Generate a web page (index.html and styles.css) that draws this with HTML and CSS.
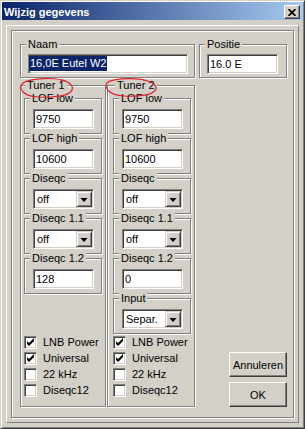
FILE: index.html
```html
<!DOCTYPE html>
<html lang="nl">
<head>
    <meta charset="UTF-8">
    <meta name="viewport" content="width=device-width, initial-scale=1.0">
    <title>Wijzig gegevens</title>
    <link rel="stylesheet" href="styles.css">
</head>
<body>
    <div class="window">
        <div class="titlebar">
            <span class="title">Wijzig gegevens</span>
            <span class="close-btn">
                <svg width="8" height="7" viewBox="0 0 8 7"><path d="M0.5 0 L7.5 7 M7.5 0 L0.5 7" stroke="#000" stroke-width="1.7" fill="none"/></svg>
            </span>
        </div>

        <div class="panel">
            <div class="frame">
                <div class="left-col">
                    <div class="group naam">
                        <span class="group-label">Naam</span>
                        <div class="edit"><span class="selected">16,0E Eutel W2</span></div>
                    </div>

                    <div class="tuners">
                        <!-- red hand drawn marks round the tuner labels -->
                        <svg class="marks" width="175" height="30" viewBox="0 0 175 30">
                            <path d="M46 5 C36 1, 10 2, 3 7 C-2 12, 2 20, 18 21 C32 22, 50 20, 52 14 C54 9, 48 5, 40 4" fill="none" stroke="#e0242c" stroke-width="1.2"/>
                            <path d="M130 6 C120 1, 95 2, 88 6 C83 11, 88 19, 104 20 C118 21, 134 19, 136 13 C137 8, 130 5, 123 4" fill="none" stroke="#e0242c" stroke-width="1.2"/>
                        </svg>

                        <div class="group tuner">
                            <span class="group-label">Tuner 1</span>
                            <div class="group field">
                                <span class="group-label">LOF low</span>
                                <div class="edit">9750</div>
                            </div>
                            <div class="group field">
                                <span class="group-label">LOF high</span>
                                <div class="edit">10600</div>
                            </div>
                            <div class="group field">
                                <span class="group-label">Diseqc</span>
                                <div class="edit combo"><span class="combo-text">off</span><span class="drop-btn"></span></div>
                            </div>
                            <div class="group field">
                                <span class="group-label">Diseqc 1.1</span>
                                <div class="edit combo"><span class="combo-text">off</span><span class="drop-btn"></span></div>
                            </div>
                            <div class="group field">
                                <span class="group-label">Diseqc 1.2</span>
                                <div class="edit">128</div>
                            </div>
                            <div class="checks">
                                <div class="check-row"><span class="checkbox checked"></span>LNB Power</div>
                                <div class="check-row"><span class="checkbox checked"></span>Universal</div>
                                <div class="check-row"><span class="checkbox"></span>22 kHz</div>
                                <div class="check-row"><span class="checkbox"></span>Diseqc12</div>
                            </div>
                        </div>

                        <div class="group tuner tuner-2">
                            <span class="group-label">Tuner 2</span>
                            <div class="group field">
                                <span class="group-label">LOF low</span>
                                <div class="edit">9750</div>
                            </div>
                            <div class="group field">
                                <span class="group-label">LOF high</span>
                                <div class="edit">10600</div>
                            </div>
                            <div class="group field">
                                <span class="group-label">Diseqc</span>
                                <div class="edit combo"><span class="combo-text">off</span><span class="drop-btn"></span></div>
                            </div>
                            <div class="group field">
                                <span class="group-label">Diseqc 1.1</span>
                                <div class="edit combo"><span class="combo-text">off</span><span class="drop-btn"></span></div>
                            </div>
                            <div class="group field">
                                <span class="group-label">Diseqc 1.2</span>
                                <div class="edit">0</div>
                            </div>
                            <div class="group field">
                                <span class="group-label">Input</span>
                                <div class="edit combo"><span class="combo-text">Separ.</span><span class="drop-btn"></span></div>
                            </div>
                            <div class="checks">
                                <div class="check-row"><span class="checkbox checked"></span>LNB Power</div>
                                <div class="check-row"><span class="checkbox checked"></span>Universal</div>
                                <div class="check-row"><span class="checkbox"></span>22 kHz</div>
                                <div class="check-row"><span class="checkbox"></span>Diseqc12</div>
                            </div>
                        </div>
                    </div>
                </div>

                <div class="right-col">
                    <div class="group positie">
                        <span class="group-label">Positie</span>
                        <div class="edit">16.0 E</div>
                    </div>
                    <button type="button" class="btn btn-cancel">Annuleren</button>
                    <button type="button" class="btn">OK</button>
                </div>
            </div>
        </div>
    </div>
</body>
</html>
```

FILE: styles.css
```css
body {
    margin: 0;
    padding: 0;
    font-family: "Liberation Sans", Arial, sans-serif;
    font-size: 11px;
    color: #000;
    background-color: #d4d0c8;
}

/* Window frame */
.window {
    width: 305px;
    height: 429px;
    box-sizing: border-box;
    padding: 1px;
    border: 1px solid;
    border-color: #d4d0c8 #404040 #404040 #d4d0c8;
    box-shadow: inset 1px 1px #fff, inset -1px -1px #808080;
    background-color: #d4d0c8;
    display: flex;
    flex-direction: column;
}

.titlebar {
    height: 18px;
    display: flex;
    align-items: flex-start;
    background: linear-gradient(to right, #0a246a, #a6caf0);
}

.title {
    flex: 1;
    padding: 2px 0 0 2px;
    line-height: 16px;
    font-weight: bold;
    color: #fff;
}

.close-btn {
    width: 16px;
    height: 14px;
    box-sizing: border-box;
    margin: 3px 3px 0 0;
    border: 1px solid;
    border-color: #fff #404040 #404040 #fff;
    box-shadow: inset -1px -1px #808080;
    background-color: #d4d0c8;
    display: flex;
    align-items: center;
    justify-content: center;
}

/* Dialog body */
.panel {
    flex: 1;
    margin: 5px 4px 4px 4px;
    padding: 4px;
    border: 1px solid;
    border-color: #fff #808080 #808080 #fff;
    display: flex;
}

.frame {
    flex: 1;
    display: flex;
    gap: 4px;
    padding: 13px 6px 10px 8px;
    border: 1px solid #808080;
    box-shadow: inset 1px 1px #fff, 1px 1px #fff;
}

.left-col {
    width: 175px;
    display: flex;
    flex-direction: column;
}

.right-col {
    flex: 1;
    display: flex;
    flex-direction: column;
    align-items: flex-end;
}

/* Group boxes */
.group {
    border: 1px solid #808080;
    box-shadow: inset 1px 1px #fff, 1px 1px #fff;
}

.group-label {
    display: block;
    width: fit-content;
    margin-top: -7px;
    padding: 0 2px;
    line-height: 13px;
    background-color: #d4d0c8;
    white-space: nowrap;
}

.naam, .positie {
    padding: 0 6px 3px 7px;
}

.naam > .group-label, .positie > .group-label {
    margin-left: -2px;
}

.positie {
    align-self: stretch;
    padding-right: 8px;
}

.naam .edit, .positie .edit {
    margin-top: 3px;
}

.tuners {
    position: relative;
    flex: 1;
    margin-top: 7px;
    display: grid;
    grid-template-columns: 86px 88px;
    gap: 1px;
}

.marks {
    position: absolute;
    left: 0;
    top: -9px;
    overflow: visible;
    pointer-events: none;
}

.tuner {
    display: flex;
    flex-direction: column;
    padding: 0 3px 8px 3px;
}

.tuner > .group-label {
    margin-left: 1px;
}

.tuner-2 {
    padding-left: 5px;
}

.tuner-2 > .group-label {
    margin-left: 2px;
}

.field {
    margin-top: 4px;
    padding: 0 7px 4px 8px;
}

.field > .group-label {
    margin-left: -3px;
}

.tuner > .group-label + .field {
    margin-top: 6px;
}

.field .edit {
    margin-top: 4px;
}

/* Edit and combo boxes */
.edit {
    height: 20px;
    box-sizing: border-box;
    padding-left: 2px;
    border: 1px solid;
    border-color: #808080 #fff #fff #808080;
    box-shadow: inset 1px 1px #404040, inset -1px -1px #d4d0c8;
    background-color: #fff;
    line-height: 18px;
    display: flex;
    white-space: nowrap;
}

.selected {
    margin: 1px 0 0 -2px;
    padding: 0 1px;
    height: 15px;
    line-height: 15px;
    background-color: #0a246a;
    color: #fff;
}

.combo {
    padding-left: 0;
}

.combo-text {
    flex: 1;
    padding-left: 3px;
}

.drop-btn {
    width: 16px;
    height: 16px;
    box-sizing: border-box;
    margin: 1px 1px 0 0;
    border: 1px solid;
    border-color: #d4d0c8 #404040 #404040 #d4d0c8;
    box-shadow: inset 1px 1px #fff, inset -1px -1px #808080;
    background-color: #d4d0c8;
    position: relative;
}

/* small arrow of the drop button */
.drop-btn::after {
    content: "";
    position: absolute;
    left: 3px;
    top: 6px;
    border-left: 4px solid transparent;
    border-right: 4px solid transparent;
    border-top: 4px solid #000;
    width: 0;
    height: 0;
    transform: scaleX(0.9);
}

/* Check boxes */
.checks {
    margin-top: auto;
}

.check-row {
    height: 16px;
    line-height: 16px;
    display: flex;
    gap: 6px;
    white-space: nowrap;
}

.checkbox {
    width: 13px;
    height: 13px;
    box-sizing: border-box;
    margin-top: 2px;
    flex-shrink: 0;
    border: 1px solid;
    border-color: #808080 #fff #fff #808080;
    box-shadow: inset 1px 1px #404040, inset -1px -1px #d4d0c8;
    background-color: #fff;
}

.checkbox.checked {
    background-image: url("data:image/svg+xml;utf8,<svg xmlns='http://www.w3.org/2000/svg' width='11' height='11' viewBox='1 1 11 11'><path d='M3 5 L5 7 L10 2 L10 5 L5 10 L3 8 Z' fill='black'/></svg>");
    background-repeat: no-repeat;
}

/* Buttons */
.btn {
    width: 58px;
    height: 25px;
    padding: 0;
    border: 1px solid;
    border-color: #fff #404040 #404040 #fff;
    box-shadow: inset -1px -1px #808080;
    background-color: #d4d0c8;
    font-family: "Liberation Sans", Arial, sans-serif;
    font-size: 11px;
    color: #000;
}

.btn-cancel {
    margin-top: auto;
    margin-bottom: 5px;
}
```
